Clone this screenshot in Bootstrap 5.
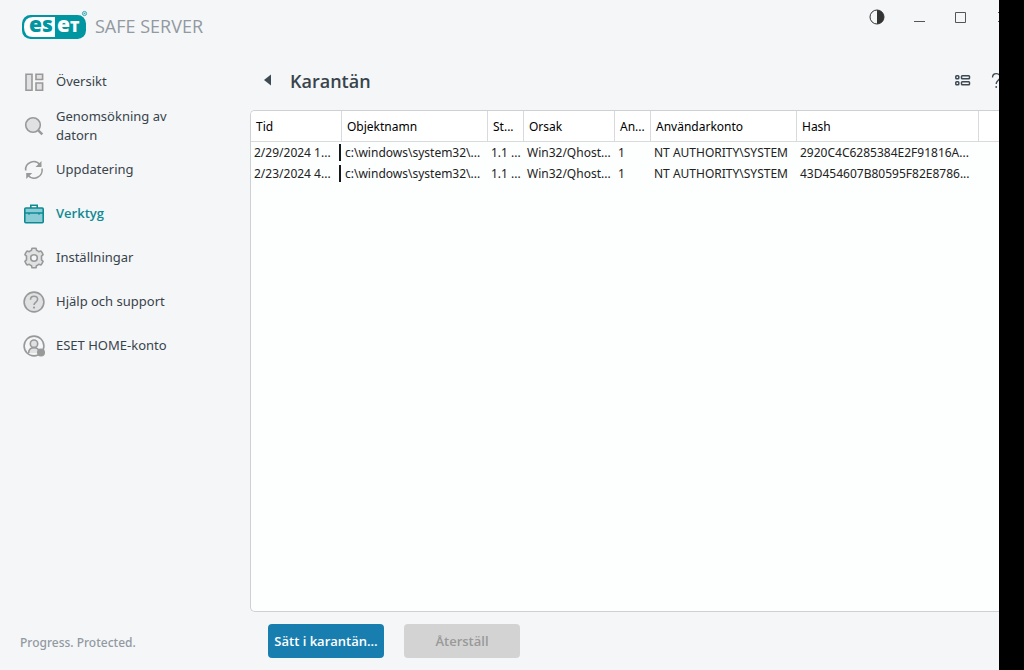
<!DOCTYPE html>
<html lang="sv">
<head>
<meta charset="utf-8">
<meta name="viewport" content="width=device-width, initial-scale=1">
<title>ESET Safe Server – Karantän</title>
<link href="https://cdn.jsdelivr.net/npm/bootstrap@5.3.0/dist/css/bootstrap.min.css" rel="stylesheet">
<style>
  body { font-family: "Noto Sans", "Open Sans", sans-serif; font-size: 13px; color: #38434b; background: #000; }
  button { font-family: inherit; }
  .app-window { background: #f4f6f8; margin-right: 25px; }
  .side { width: 250px; }
  .brand { height: 60px; padding: 10px 0 0 22px; gap: 7px; }
  .brand-name { font-size: 18px; line-height: 32px; color: #92999f; font-family: "Open Sans", sans-serif; }
  .logo-text { font-family: "Open Sans", sans-serif; font-weight: 800; font-size: 21px; }
  .logo-cap { font-size: 16px; }
  .side-link { height: 44px; padding: 0 60px 2px 23px; gap: 11px; line-height: 19px; font-size: 13px; color: #38434b; text-decoration: none; }
  .side-link svg { width: 22px; height: 22px; margin-top: 2px; }
  .side-link.active { color: #0f8a93; font-family: "Open Sans", sans-serif; font-weight: 600; }
  .side-link.two-line { padding-bottom: 0; }
  .side-link.two-line svg { margin-top: 0; }
  .gray-icon { fill: #e0e1e2; stroke: #999; stroke-width: 1.6; }
  .tagline { padding: 0 0 17px 20px; font-size: 12px; line-height: 20px; font-weight: 500; color: #92999f; }
  .win-controls { height: 34px; gap: 26px; margin-right: -12px; }
  .icon-btn { width: 16px; height: 16px; padding: 0; border: 0; background: none; line-height: 0; color: #38434b; }
  .page-head { height: 76px; padding: 0 0 13px 10px; gap: 14px; }
  .page-head h1 { font-family: "Open Sans", sans-serif; font-size: 18px; line-height: 24px; font-weight: 600; }
  .head-tools { gap: 19px; margin-right: -7px; }
  .list-frame { background: #fdfefe; border: 1px solid #ced1d3; border-right: 0; border-radius: 5px 0 0 5px; }
  .list-frame table { table-layout: fixed; border-collapse: separate; border-spacing: 0; font-size: 12px; color: #222; white-space: nowrap; }
  .list-frame th { height: 31px; padding: 1px 0 0 5px; font-weight: 400; color: #000; background: #fff; border-right: 1px solid #d8dadc; border-bottom: 1px solid #d8dadc; }
  .list-frame th:last-child { border-right: 0; }
  .list-frame td { height: 21px; padding: 0 0 0 3px; line-height: 21px; }
  .type-bar { width: 2px; height: 17px; background: #15181a; margin-right: 1px; }
  .actions { padding: 12px 0 12px 18px; gap: 20px; }
  .action-btn { width: 116px; height: 34px; padding: 1px 0 0; border: 0; border-radius: 4px; font-family: "Open Sans", sans-serif; font-size: 13px; font-weight: 600; }
  .action-main { background: #187eb0; color: #fff; }
  .action-btn:disabled { background: #d3d3d3; color: #999; opacity: 1; }
</style>
</head>
<body>
<div class="app-window vh-100 d-flex overflow-hidden">
  <aside class="side d-flex flex-column flex-shrink-0">
    <div class="brand d-flex">
      <svg width="66" height="30" viewBox="0 0 66 30" role="img" aria-label="ESET">
        <rect x="0" y="5" width="64" height="24" rx="8.500" fill="#0096a1"/>
        <path d="M33 7H11Q2 7 2 17T11 27H33Z" fill="#fff"/>
        <text class="logo-text" x="7" y="22" fill="#0096a1">es</text>
        <text class="logo-text" x="35" y="22" fill="#fff">e<tspan class="logo-cap">T</tspan></text>
        <circle cx="62.500" cy="3.500" r="2.100" fill="#cfe8eb" stroke="#3aacb4"/>
        <circle cx="62.500" cy="3.500" r=".8" fill="#3aacb4"/>
      </svg>
      <span class="brand-name text-nowrap">SAFE SERVER</span>
    </div>
    <nav class="d-flex flex-column flex-grow-1">
      <a class="side-link d-flex align-items-center" href="#">
        <svg class="gray-icon flex-shrink-0" viewBox="0 0 22 22"><path d="M3 3.300h6v15.900H3zM13 3.300h6.600v5.200H13zM13 12h6.600v7.200H13z"/></svg>
        Översikt</a>
      <a class="side-link two-line d-flex align-items-center" href="#">
        <svg class="gray-icon flex-shrink-0" viewBox="0 0 22 22"><circle cx="10" cy="10" r="7.300"/><path d="m15.300 15.300 4 4" stroke-width="2.400"/></svg>
        Genomsökning av datorn</a>
      <a class="side-link d-flex align-items-center" href="#">
        <svg class="flex-shrink-0" viewBox="0 0 22 22" fill="none" stroke="#999" stroke-width="1.600"><path d="M2.700 11.500A8 8 0 0 1 17 5.800M19 9.500A8 8 0 0 1 5 16.200"/><path d="M18.500 2v6h-6zM3.200 20v-6h6z" fill="#999" stroke="none"/></svg>
        Uppdatering</a>
      <a class="side-link active d-flex align-items-center" href="#" aria-current="page">
        <svg class="flex-shrink-0" viewBox="0 0 22 22" fill="#8accd6" stroke="#0f8a93" stroke-width="1.600"><path d="M7.800 5V2.300h6.400V5" fill="none"/><rect x="1.800" y="5" width="18.400" height="14.800" rx="1"/><path d="M2 10h18M6 9.500v2.200M16 9.500v2.200" fill="none" stroke-width="1.300"/></svg>
        Verktyg</a>
      <a class="side-link d-flex align-items-center" href="#">
        <svg class="gray-icon flex-shrink-0" viewBox="0 0 22 22"><path stroke-linejoin="round" d="M8.500 3.300L9 1.200H13L13.500 3.300Q14.700 3.800 15.800 4.700L17.900 4Q19.300 5.500 20.100 7.700L18.500 9.200V12.800L20.100 14.300Q19.300 16.500 17.900 18L15.800 17.300Q14.700 18.200 13.500 18.700L13 20.800H9L8.500 18.700Q7.300 18.200 6.200 17.300L4.100 18Q2.700 16.500 1.900 14.300L3.500 12.800V9.200L1.900 7.700Q2.700 5.500 4.100 4L6.200 4.700Q7.300 3.800 8.500 3.300Z"/><circle cx="11" cy="11" r="3.300" fill="#f4f6f8"/></svg>
        Inställningar</a>
      <a class="side-link d-flex align-items-center" href="#">
        <svg class="gray-icon flex-shrink-0" viewBox="0 0 22 22"><circle cx="11" cy="11" r="9.900"/><path d="M7.500 8.800C7.500 6.500 9 5.300 11 5.300s3.600 1.200 3.600 3.200c0 2.600-3.600 2.500-3.600 5.500" fill="none"/><circle cx="11" cy="16.600" r="1.100" fill="#999" stroke="none"/></svg>
        Hjälp och support</a>
      <a class="side-link d-flex align-items-center" href="#">
        <svg class="gray-icon flex-shrink-0" viewBox="0 0 22 22"><circle cx="11" cy="11" r="9.900" fill="#f4f6f8"/><path d="M5.600 18c.2-3.600 2-5.200 5.400-5.200s5.200 1.600 5.400 5.200"/><circle cx="11" cy="8.700" r="3.700"/><circle cx="18" cy="17.500" r="4" fill="#999" stroke="none"/></svg>
        ESET HOME-konto</a>
    </nav>
    <div class="tagline">Progress. Protected.</div>
  </aside>

  <main class="d-flex flex-column flex-grow-1">
    <div class="win-controls d-flex justify-content-end align-items-center">
      <button class="icon-btn" type="button" aria-label="Kontrast"><svg width="16" height="16" viewBox="0 0 16 16"><circle cx="8" cy="8" r="7" fill="none" stroke="#333" stroke-width="1"/><path d="M8 1a7 7 0 0 1 0 14z" fill="#333"/></svg></button>
      <button class="icon-btn" type="button" aria-label="Minimera"><svg width="16" height="16" viewBox="0 0 16 16"><path d="M3 12.500h11" stroke="#555"/></svg></button>
      <button class="icon-btn" type="button" aria-label="Maximera"><svg width="16" height="16" viewBox="0 0 16 16"><path d="M2.500 3.500h10v10h-10z" fill="none" stroke="#555"/></svg></button>
      <button class="icon-btn" type="button" aria-label="Stäng"><svg width="16" height="16" viewBox="0 0 16 16"><path d="m3 3 10 10M13 3 3 13" stroke="#555"/></svg></button>
    </div>
    <div class="page-head d-flex align-items-end">
      <button class="icon-btn mb-2" type="button" aria-label="Tillbaka"><svg width="16" height="16" viewBox="0 0 16 16"><path d="M4 7l7-5.500v11z" fill="#3d4a53"/></svg></button>
      <h1 class="mb-1 me-auto">Karantän</h1>
      <div class="head-tools d-flex mb-2">
        <button class="icon-btn" type="button" aria-label="Visa"><svg width="16" height="16" viewBox="0 0 16 16" fill="none" stroke="#3d4a53" stroke-width="1.500"><rect x=".8" y="2.700" width="3" height="3" rx=".8"/><rect x="6.500" y="2.700" width="8" height="3" rx=".8"/><rect x=".8" y="8.700" width="3" height="3" rx=".8"/><rect x="6.500" y="8.700" width="8" height="3" rx=".8"/></svg></button>
        <button class="icon-btn" type="button" aria-label="Hjälp"><svg width="16" height="16" viewBox="0 0 16 16" fill="none" stroke="#3d4a53" stroke-width="1.300"><path d="M2.500 4.500C2.500 2 4 .7 6.200.7S10 2 10 4.200c0 3-3.800 3.300-3.800 6.800"/><circle cx="6.200" cy="14" r=".9" fill="#3d4a53" stroke="none"/></svg></button>
      </div>
    </div>
    <div class="list-frame flex-grow-1 overflow-hidden">
      <table class="w-100">
        <colgroup><col style="width:91px"><col style="width:146px"><col style="width:36px"><col style="width:91px"><col style="width:36px"><col style="width:146px"><col style="width:182px"><col></colgroup>
        <thead><tr><th>Tid</th><th>Objektnamn</th><th>St...</th><th>Orsak</th><th>An...</th><th>Användarkonto</th><th>Hash</th><th></th></tr></thead>
        <tbody>
          <tr><td><div class="d-flex justify-content-between align-items-center">2/29/2024 1...<span class="type-bar"></span></div></td><td>c:\windows\system32\...</td><td>1.1 ...</td><td>Win32/Qhost...</td><td>1</td><td>NT AUTHORITY\SYSTEM</td><td>2920C4C6285384E2F91816A...</td><td></td></tr>
          <tr><td><div class="d-flex justify-content-between align-items-center">2/23/2024 4...<span class="type-bar"></span></div></td><td>c:\windows\system32\...</td><td>1.1 ...</td><td>Win32/Qhost...</td><td>1</td><td>NT AUTHORITY\SYSTEM</td><td>43D454607B80595F82E8786...</td><td></td></tr>
        </tbody>
      </table>
    </div>
    <div class="actions d-flex">
      <button class="action-btn action-main" type="button">Sätt i karantän...</button>
      <button class="action-btn" type="button" disabled>Återställ</button>
    </div>
  </main>
</div>
<script src="https://cdn.jsdelivr.net/npm/bootstrap@5.3.0/dist/js/bootstrap.bundle.min.js"></script>
</body>
</html>
